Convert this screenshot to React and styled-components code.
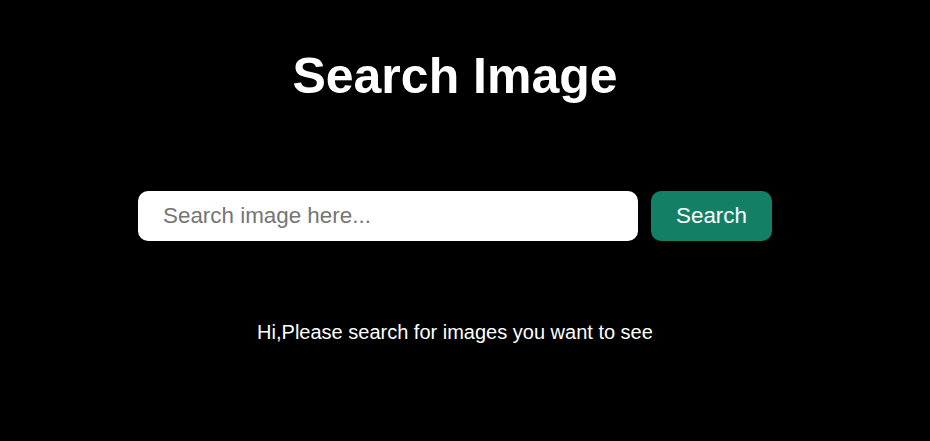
import { useState } from "react";
import styled, { createGlobalStyle } from "styled-components";

const GlobalStyle = createGlobalStyle`
  body {
    margin: 0;
    background: #000;
    font-family: "Liberation Sans", Arial, sans-serif;
  }
`;

export default function App() {
  const [query, setQuery] = useState("");

  const handleSubmit = (e) => {
    e.preventDefault();
  };

  return (
    <>
      <GlobalStyle />
      <Page>
        <Title>Search Image</Title>
        <SearchForm onSubmit={handleSubmit}>
          <SearchInput
            type="text"
            placeholder="Search image here..."
            value={query}
            onChange={(e) => setQuery(e.target.value)}
          />
          <SearchButton type="submit">Search</SearchButton>
        </SearchForm>
        <Message>Hi,Please search for images you want to see</Message>
      </Page>
    </>
  );
}

const Page = styled.div`
  display: flex;
  flex-direction: column;
  align-items: center;
  min-height: 100vh;
  padding: 48px 20px 0 0;
  box-sizing: border-box;
  color: #fff;
`;

const Title = styled.h1`
  margin: 0;
  font-size: 50px;
  font-weight: 700;
  line-height: 57px;
`;

const SearchForm = styled.form`
  display: flex;
  gap: 13px;
  margin-top: 86px;
`;

const SearchInput = styled.input`
  width: 500px;
  height: 50px;
  box-sizing: border-box;
  padding: 0 25px;
  border: none;
  border-radius: 10px;
  background: #fff;
  font-family: inherit;
  font-size: 22.4px;
  color: #000;
  outline: none;

  &::placeholder {
    color: #757575;
  }
`;

const SearchButton = styled.button`
  width: 121px;
  height: 50px;
  padding: 0;
  border: none;
  border-radius: 10px;
  background: #138066;
  color: #fff;
  font-family: inherit;
  font-size: 22.4px;
  cursor: pointer;
`;

const Message = styled.p`
  margin: 80px 0 0;
  font-size: 20px;
  line-height: 23px;
`;
